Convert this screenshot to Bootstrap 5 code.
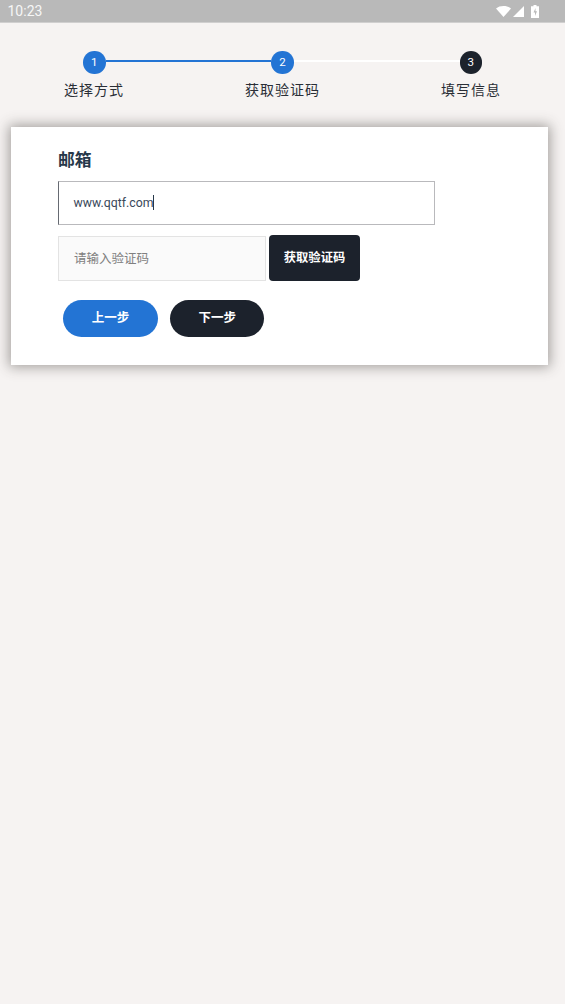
<!DOCTYPE html>
<html lang="zh-CN">
<head>
<meta charset="utf-8">
<title>获取验证码</title>
<link href="https://cdn.jsdelivr.net/npm/bootstrap@5.3.0/dist/css/bootstrap.min.css" rel="stylesheet">
<style>
html,body{height:100%;}
body{background:#f6f3f2;font-family:Roboto,"Noto Sans CJK SC",sans-serif;color:#1c222c;width:565px;height:1004px;overflow:hidden;}
.statusbar{height:23px;background:#b9b9b9;border-bottom:1px solid #d0cfcf;color:#f6f6f6;font-size:14px;padding:0 26px 0 7.500px;}
.statusbar svg{display:block;}
.sig-icon{margin-left:2px;}
.batt-icon{margin-left:7px;}
.stepper{padding:28px 0 0 0;height:104px;position:relative;}
.step-track{position:relative;margin:0 83px;height:22px;}
.step-track .seg{height:2px;flex:1;margin-top:9px;}
.seg-done{background:#2374d4;}
.seg-todo{background:#fff;}
.dot{width:22.500px;height:22.500px;border-radius:50%;color:#fff;font-size:11.500px;flex:none;line-height:23px;text-align:center;}
.dot-blue{background:#2374d4;}
.dot-dark{background:#1c222c;}
.step-labels{font-size:14px;letter-spacing:1px;color:#2a2e36;margin-top:7px;height:20px;line-height:20px;}
.lab{position:absolute;white-space:nowrap;}
.l1{left:64px}.l2{left:245px}.l3{left:441px}
.panel{margin-left:11px;width:537px;height:238px;background:#fff;box-shadow:0 0 12px 2px rgba(60,55,50,.45);padding:22px 0 0 47px;}
.mail-title{font-size:16.800px;font-weight:700;color:#27384a;line-height:22px;margin-bottom:10px;}
.mail-input{width:377px;height:44px;border:1px solid #b9b9bc;border-left-color:#666a72;padding:0 14.500px;font-size:12.300px;color:#39485a;line-height:42px;}
.caret-bar{display:inline-block;width:1px;height:15px;background:#27384a;vertical-align:-3px;}
.code-row{margin-top:10px;align-items:flex-end;}
.code-input{width:208px;height:45px;border:1px solid #e3e3e3;background:#fafafa;padding:0 15px;font-size:12.500px;color:#808080;line-height:43px;}
.code-btn{width:91px;height:46px;margin-left:3px;background:#1c222c;color:#fff;border-radius:4px;font-size:12.300px;font-weight:700;border:0;padding:0;}
.act-row{margin:19px 0 0 5.300px;gap:12.400px;}
.act-btn{width:94.300px;height:37px;border-radius:19px;border:0;padding:0;color:#fff;font-size:12.500px;font-weight:700;}
.act-blue{background:#2374d4;}
.act-dark{background:#1c222c;}
</style>
</head>
<body>
<div class="statusbar d-flex align-items-center justify-content-between">
  <span>10:23</span>
  <span class="d-flex align-items-center">
    <svg width="15" height="11" viewBox="0 0 15 11"><path fill="#fff" d="M0 2.500C2 .8 4.500 0 7.500 0S13 .8 15 2.500L7.500 11z"/></svg>
    <svg class="sig-icon" width="11" height="11" viewBox="0 0 11 11"><path fill="#fff" d="M11 0v11H0z"/></svg>
    <svg class="batt-icon" width="8" height="13" viewBox="0 0 8 13"><path fill="#fff" d="M2.500 0h3v1.300H8V13H0V1.300h2.500z"/><path fill="#b9b9b9" d="M4.500 3 2.500 7.500H4V11l2-4.800H4.500z"/></svg>
  </span>
</div>
<div class="stepper">
  <div class="step-track d-flex">
    <div class="dot dot-blue">1</div>
    <div class="seg seg-done"></div>
    <div class="dot dot-blue">2</div>
    <div class="seg seg-todo"></div>
    <div class="dot dot-dark">3</div>
  </div>
  <div class="step-labels">
    <span class="lab l1">选择方式</span>
    <span class="lab l2">获取验证码</span>
    <span class="lab l3">填写信息</span>
  </div>
</div>
<div class="panel">
  <div class="mail-title">邮箱</div>
  <div class="mail-input">www.qqtf.com<span class="caret-bar"></span></div>
  <div class="code-row d-flex">
    <div class="code-input">请输入验证码</div>
    <button class="code-btn btn" type="button">获取验证码</button>
  </div>
  <div class="act-row d-flex">
    <button class="act-btn act-blue btn" type="button">上一步</button>
    <button class="act-btn act-dark btn" type="button">下一步</button>
  </div>
</div>
<script src="https://cdn.jsdelivr.net/npm/bootstrap@5.3.0/dist/js/bootstrap.bundle.min.js"></script>
</body>
</html>
